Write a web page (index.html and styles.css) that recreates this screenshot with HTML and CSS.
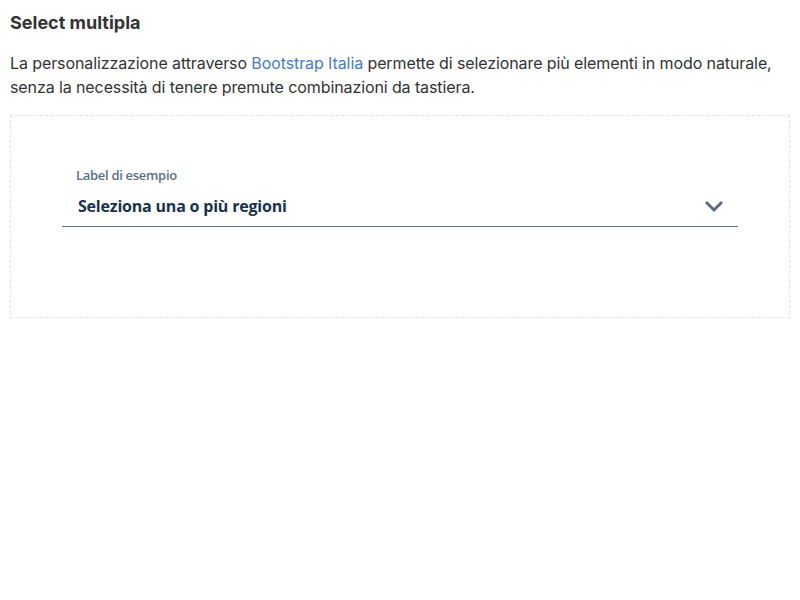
FILE: index.html
```html
<!DOCTYPE html>
<html lang="it">
<head>
<meta charset="utf-8">
<title>Select multipla</title>
<link rel="stylesheet" href="styles.css">
</head>
<body>
<h3 class="title">Select multipla</h3>
<p class="intro">La personalizzazione attraverso <a href="#" class="link">Bootstrap Italia</a> permette di selezionare più elementi in modo naturale, senza la necessità di tenere premute combinazioni da tastiera.</p>
<div class="example">
  <div class="field">
    <label class="field-label">Label di esempio</label>
    <div class="select">
      <span class="select-text">Seleziona una o più regioni</span>
      <svg class="chevron" width="20" height="14" viewBox="0 0 20 14" aria-hidden="true"><path d="M2 3 L10 11 L18 3" fill="none" stroke="#5f6b7a" stroke-width="3"/></svg>
    </div>
  </div>
</div>
</body>
</html>
```

FILE: styles.css
```css
html, body { margin: 0; padding: 0; background: #fff; }
body {
  padding: 0 10px;
  font-family: "Inter", "Liberation Sans", sans-serif;
  color: #333;
}
.title {
  margin: 0;
  padding-top: 12px;
  font-size: 18px;
  line-height: 22px;
  font-weight: 700;
  color: #333;
  letter-spacing: 0;
}
.intro {
  margin: 17px 0 16px;
  font-size: 16px;
  line-height: 24px;
  color: #333;
  letter-spacing: -0.1px;
}
.link { color: #4a7bbf; text-decoration: none; }
.example {
  border: 1px dashed #e3e3e3;
  padding: 50px 51px 90px 51px;
}
.field { display: flex; flex-direction: column; }
.field-label {
  font-family: "Open Sans", sans-serif;
  font-size: 13px;
  font-weight: 600;
  color: #5c6f82;
  padding-left: 14px;
  line-height: 18px;
  letter-spacing: -0.3px;
}
.select {
  display: flex;
  align-items: center;
  justify-content: space-between;
  border-bottom: 1px solid #5c6f82;
  padding: 11px 14px 9px 16px;
}
.select-text {
  font-family: "Open Sans", sans-serif;
  font-size: 16px;
  font-weight: 700;
  color: #17324d;
  line-height: 22px;
  letter-spacing: -0.2px;
}
.chevron { display: block; }
```
